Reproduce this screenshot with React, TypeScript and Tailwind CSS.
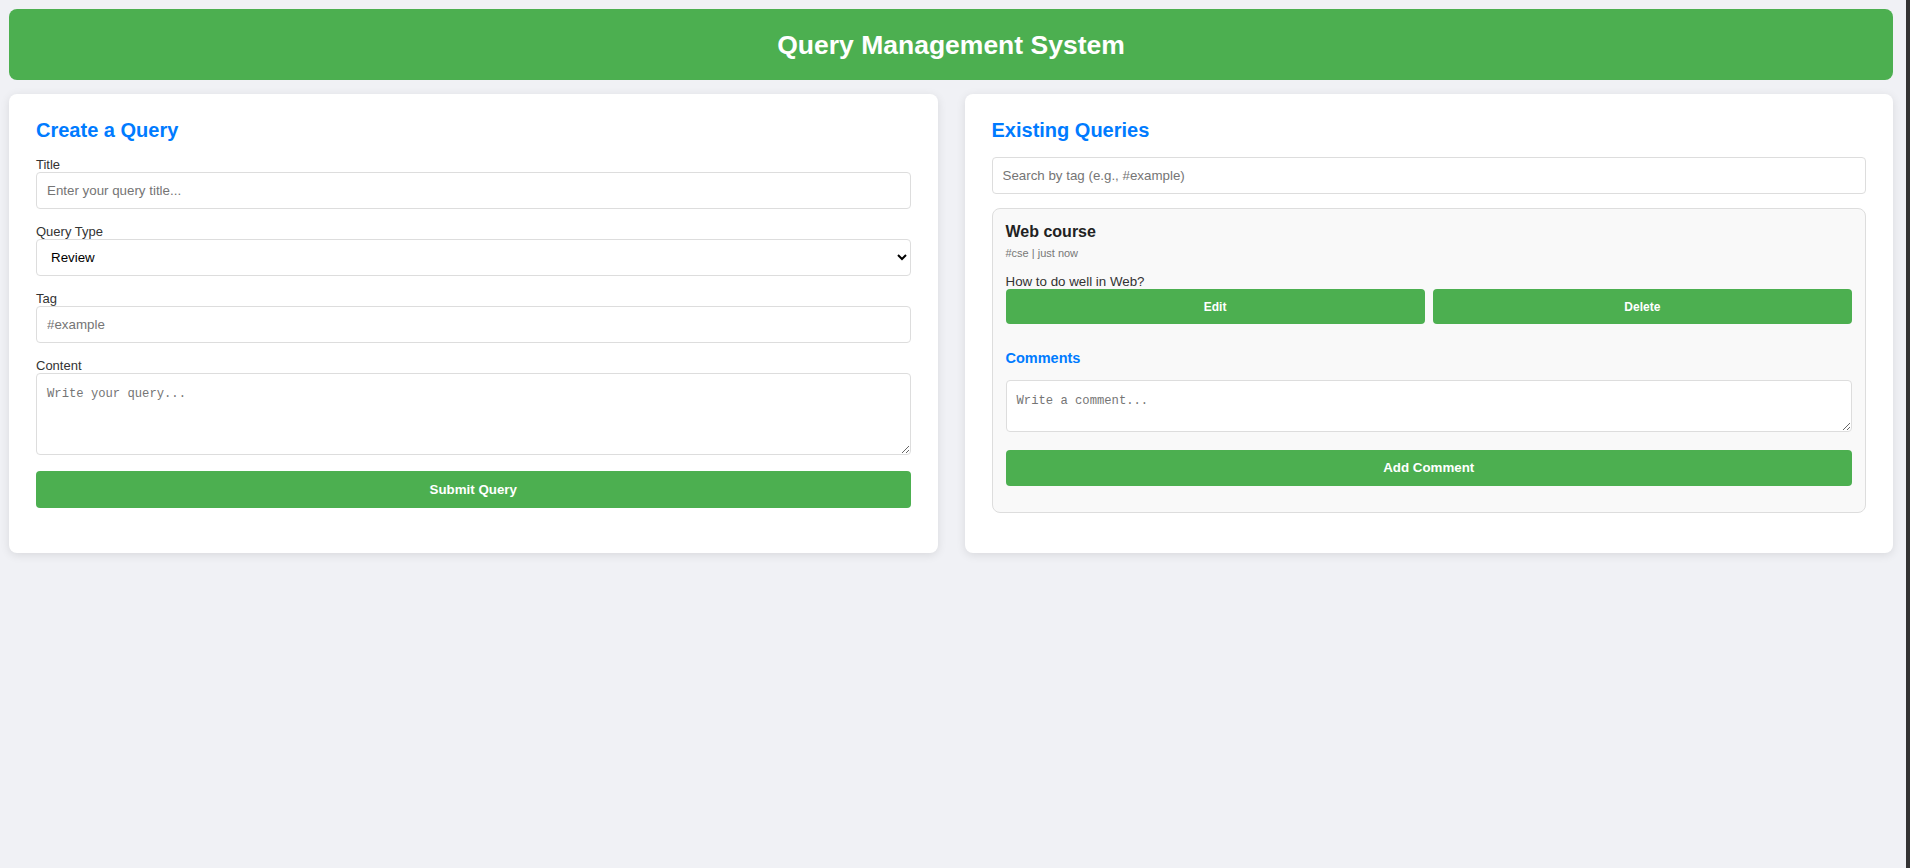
import React from "react";

const inputCls =
  "block w-full h-[37px] border border-[#ddd] rounded-[4px] bg-white px-[10px] text-[13.33px] leading-[15px] text-black placeholder:text-[#757575] outline-none";

function Label({ children }: { children: React.ReactNode }) {
  return <label className="block text-[13px] leading-[15px] text-[#333]">{children}</label>;
}

export default function App() {
  return (
    <div
      className="flex min-h-screen bg-[#f0f1f5]"
      style={{ fontFamily: '"Liberation Sans", Arial, sans-serif' }}
    >
      <div className="flex-1 pl-[9px] pt-[9px]">
        <div className="w-[1884px]">
          <header className="h-[71px] rounded-lg bg-[#4caf50] flex items-center justify-center mb-[14px]">
            <h1 className="text-[26.5px] leading-[30px] font-bold text-white">Query Management System</h1>
          </header>

          <div className="grid grid-cols-2 gap-[27px]">
            {/* Left card */}
            <div className="bg-white rounded-lg shadow-[0_2px_10px_rgba(0,0,0,0.1)] px-[27px] pt-[25px] pb-[25px]">
              <h2 className="text-[20px] leading-[23px] font-bold text-[#007bff] mb-[15px]">Create a Query</h2>
              <Label>Title</Label>
              <input className={inputCls + " mb-[15px]"} placeholder="Enter your query title..." />
              <Label>Query Type</Label>
              <select
                className="block w-full h-[37px] border border-[#ddd] rounded-[4px] bg-white px-[10px] text-[13.33px] text-black mb-[15px] outline-none"
                defaultValue="Review"
              >
                <option>Review</option>
                <option>Question</option>
                <option>Discussion</option>
              </select>
              <Label>Tag</Label>
              <input className={inputCls + " mb-[15px]"} placeholder="#example" />
              <Label>Content</Label>
              <textarea
                className="block w-full h-[82px] border border-[#ddd] rounded-[4px] bg-white px-[10px] pt-[12px] pb-[8px] text-[12.2px] leading-[17px] text-black placeholder:text-[#757575] outline-none mb-[16px]"
                style={{ fontFamily: '"Liberation Mono", monospace' }}
                placeholder="Write your query..."
              />
              <button className="block w-full h-[37px] rounded-[4px] bg-[#4caf50] text-white font-bold text-[13.33px] mb-[19px]">
                Submit Query
              </button>
            </div>

            {/* Right card */}
            <div className="bg-white rounded-lg shadow-[0_2px_10px_rgba(0,0,0,0.1)] px-[27px] pt-[25px] pb-[25px]">
              <h2 className="text-[20px] leading-[23px] font-bold text-[#007bff] mb-[15px]">Existing Queries</h2>
              <input className={inputCls + " mb-[14px]"} placeholder="Search by tag (e.g., #example)" />

              <div className="bg-[#f9f9f9] border border-[#ddd] rounded-lg px-[13px] pt-[14px] pb-[13px] mb-[15px]">
                <h3 className="text-[16px] leading-[18px] font-bold text-[#222] mb-[6px]">Web course</h3>
                <div className="text-[11px] leading-[13px] text-[#777] mb-[14px]">#cse | just now</div>
                <p className="text-[13.33px] leading-[15px] text-[#333]">How to do well in Web?</p>
                <div className="grid grid-cols-2 gap-[8px]">
                  <button className="h-[35px] rounded-[4px] bg-[#4caf50] text-white font-bold text-[12px]">Edit</button>
                  <button className="h-[35px] rounded-[4px] bg-[#4caf50] text-white font-bold text-[12px]">Delete</button>
                </div>
                <h4 className="mt-[26px] text-[14.5px] leading-[17px] font-bold text-[#007bff] mb-[13px]">Comments</h4>
                <textarea
                  className="block w-full h-[52px] border border-[#ddd] rounded-[4px] bg-white px-[10px] pt-[12px] pb-[8px] text-[12.2px] leading-[17px] text-black placeholder:text-[#757575] outline-none mb-[18px]"
                  style={{ fontFamily: '"Liberation Mono", monospace' }}
                  placeholder="Write a comment..."
                />
                <button className="block w-full h-[36px] rounded-[4px] bg-[#4caf50] text-white font-bold text-[13.33px] mb-[12.5px]">
                  Add Comment
                </button>
              </div>
            </div>
          </div>
        </div>
      </div>
      <div className="w-[4px] bg-[#333]" />
    </div>
  );
}
